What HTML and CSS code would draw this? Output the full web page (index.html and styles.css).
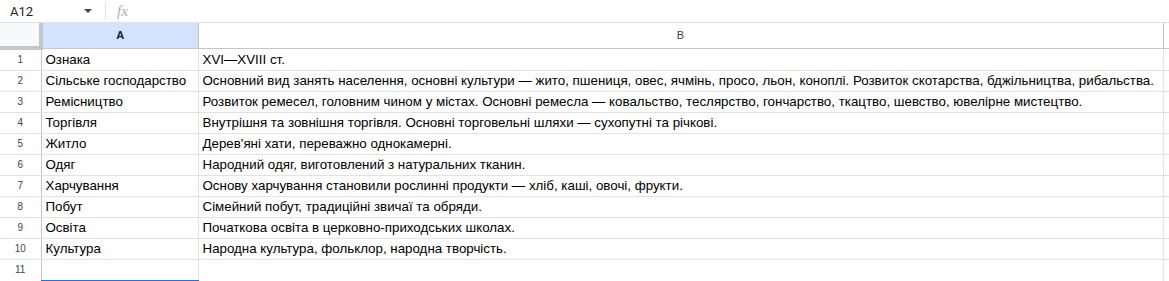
FILE: index.html
```html
<!DOCTYPE html>
<html lang="uk">
<head>
  <meta charset="UTF-8">
  <title>Таблиця</title>
  <link rel="stylesheet" href="styles.css">
</head>
<body>
<div id="formula-bar">
  <div class="name-box">A12</div>
  <span class="caret"></span>
  <span class="divider"></span>
  <span class="fx">fx</span>
</div>
<table id="grid">
  <colgroup>
    <col class="c-num"><col class="c-a"><col class="c-b"><col class="c-rest">
  </colgroup>
  <tr class="head">
    <th class="corner"></th>
    <th class="col-sel">A</th>
    <th>B</th>
    <th class="rest"></th>
  </tr>
  <tr><td class="num">1</td><td>Ознака</td><td>XVI—XVIII ст.</td><td class="rest"></td></tr>
  <tr><td class="num">2</td><td>Сільське господарство</td><td>Основний вид занять населення, основні культури — жито, пшениця, овес, ячмінь, просо, льон, коноплі. Розвиток скотарства, бджільництва, рибальства.</td><td class="rest"></td></tr>
  <tr><td class="num">3</td><td>Ремісництво</td><td>Розвиток ремесел, головним чином у містах. Основні ремесла — ковальство, теслярство, гончарство, ткацтво, шевство, ювелірне мистецтво.</td><td class="rest"></td></tr>
  <tr><td class="num">4</td><td>Торгівля</td><td>Внутрішня та зовнішня торгівля. Основні торговельні шляхи — сухопутні та річкові.</td><td class="rest"></td></tr>
  <tr><td class="num">5</td><td>Житло</td><td>Дерев'яні хати, переважно однокамерні.</td><td class="rest"></td></tr>
  <tr><td class="num">6</td><td>Одяг</td><td>Народний одяг, виготовлений з натуральних тканин.</td><td class="rest"></td></tr>
  <tr><td class="num">7</td><td>Харчування</td><td>Основу харчування становили рослинні продукти — хліб, каші, овочі, фрукти.</td><td class="rest"></td></tr>
  <tr><td class="num">8</td><td>Побут</td><td>Сімейний побут, традиційні звичаї та обряди.</td><td class="rest"></td></tr>
  <tr><td class="num">9</td><td>Освіта</td><td>Початкова освіта в церковно-приходських школах.</td><td class="rest"></td></tr>
  <tr><td class="num">10</td><td>Культура</td><td>Народна культура, фольклор, народна творчість.</td><td class="rest"></td></tr>
  <tr><td class="num">11</td><td></td><td></td><td class="rest"></td></tr>
  <tr class="sel-row"><td class="num row-sel"></td><td class="cell-sel"></td><td></td><td class="rest"></td></tr>
</table>
</body>
</html>
```

FILE: styles.css
```css
body {
  margin: 0;
  background: #fff;
  font-family: "Liberation Sans", Arial, sans-serif;
  overflow: hidden;
}
#formula-bar {
  display: flex;
  align-items: center;
  height: 22px;
  border-bottom: 1px solid #e1e3e1;
  font-family: Roboto, "Liberation Sans", sans-serif;
}
.name-box {
  width: 68px;
  padding-left: 10px;
  font-size: 13px;
  color: #1f1f1f;
}
.caret {
  width: 0;
  height: 0;
  margin-left: 6px;
  border-left: 4px solid transparent;
  border-right: 4px solid transparent;
  border-top: 4px solid #444;
}
.divider {
  width: 1px;
  height: 18px;
  margin-left: 13px;
  background: #e1e3e1;
}
.fx {
  margin-left: 11px;
  font-family: "Liberation Serif", serif;
  font-style: italic;
  font-size: 15px;
  color: #b0b0b0;
}
#grid {
  border-collapse: collapse;
  table-layout: fixed;
  width: 1169px;
}
.c-num { width: 41px; }
.c-a { width: 157px; }
.c-b { width: 965px; }
.c-rest { width: 6px; }
#grid th, #grid td {
  padding: 0 0 2px 4px;
  border-right: 1px solid #e2e2e2;
  border-bottom: 1px solid #e2e2e2;
  height: 18px;
  line-height: 16px;
  vertical-align: bottom;
  font-size: 13.33px;
  font-weight: normal;
  color: #000;
  white-space: nowrap;
  overflow: hidden;
  text-align: left;
}
#grid .head th {
  height: 23px;
  padding: 0;
  vertical-align: middle;
  font-size: 11px;
  color: #444;
  text-align: center;
  border-bottom: 1px solid #c4c7c5;
  border-right: 1px solid #c4c7c5;
}
#grid .head .corner {
  background: #f8f9fa;
  border-right: 4px solid #c4c7c5;
  border-bottom: 4px solid #c4c7c5;
}
#grid .head .col-sel {
  background: #d3e3fd;
  font-weight: bold;
  color: #041e49;
}
#grid td.num {
  padding: 0;
  height: 20px;
  vertical-align: middle;
  text-align: center;
  font-size: 10px;
  color: #444;
  border-right: 1px solid #c4c7c5;
}
#grid .rest {
  padding: 0;
}
#grid .sel-row td {
  border-bottom: none;
}
#grid td.row-sel {
  background: #d3e3fd;
}
#grid td.cell-sel {
  border-top: 2px solid #1a73e8;
}
```
